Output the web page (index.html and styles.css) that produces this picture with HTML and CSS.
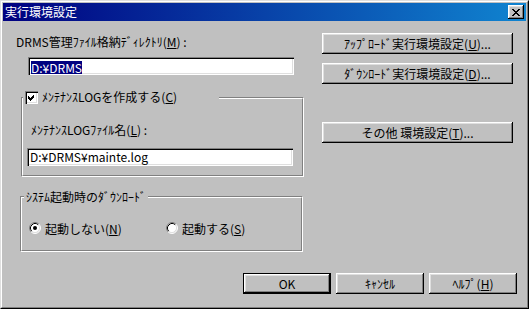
FILE: index.html
```html
<!DOCTYPE html>
<html lang="ja">
  <head>
    <meta charset="UTF-8" />
    <title>実行環境設定</title>
    <link rel="stylesheet" href="styles.css">
  </head>
  <body>
    <div class="dialog">
      <div class="frame">
        <div class="titlebar">
          <span class="title">実行環境設定</span>
          <button class="close-btn">
            <svg width="8" height="7" viewBox="0 0 8 7">
              <path d="M0 0h2v1h-2z M6 0h2v1h-2z M1 1h2v1h-2z M5 1h2v1h-2z M2 2h4v1h-4z M3 3h2v1h-2z M2 4h4v1h-4z M1 5h2v1h-2z M5 5h2v1h-2z M0 6h2v1h-2z M6 6h2v1h-2z" fill="#000"/>
            </svg>
          </button>
        </div>

        <div class="body">
          <div class="main">
            <div class="left">
              <div class="label lbl-dir">DRMS管理ﾌｧｲﾙ格納ﾃﾞｨﾚｸﾄﾘ(<u>M</u>) :</div>
              <div class="textbox tb-dir"><span class="sel">D:¥DRMS</span></div>

              <div class="group group-log">
                <div class="group-in">
                  <label class="legend legend-check">
                    <span class="checkbox">
                      <svg width="7" height="7" viewBox="0 0 7 7" shape-rendering="crispEdges">
                        <path d="M6 0v3l-4 4l-2-2v-3l2 2z" fill="#000"/>
                      </svg>
                    </span>
                    <span>ﾒﾝﾃﾅﾝｽLOGを作成する(<u>C</u>)</span>
                  </label>
                  <div class="label lbl-log">ﾒﾝﾃﾅﾝｽLOGﾌｧｲﾙ名(<u>L</u>) :</div>
                  <div class="textbox tb-log">D:¥DRMS¥mainte.log</div>
                </div>
              </div>

              <div class="group group-boot">
                <div class="group-in">
                  <div class="legend legend-text">ｼｽﾃﾑ起動時のﾀﾞｳﾝﾛｰﾄﾞ</div>
                  <div class="radios">
                    <label class="radio radio-first">
                      <svg width="12" height="12" viewBox="0 0 12 12">
                        <circle cx="6" cy="6" r="5" fill="#fff"/>
                        <path d="M2.11 9.89A5.5 5.5 0 0 1 9.89 2.11" fill="none" stroke="#808080"/>
                        <path d="M9.89 2.11A5.5 5.5 0 0 1 2.11 9.89" fill="none" stroke="#fff"/>
                        <path d="M2.82 9.18A4.5 4.5 0 0 1 9.18 2.82" fill="none" stroke="#000"/>
                        <path d="M9.18 2.82A4.5 4.5 0 0 1 2.82 9.18" fill="none" stroke="#dfdfdf"/>
                        <circle cx="6" cy="6" r="2" fill="#000"/>
                      </svg>
                      <span>起動しない(<u>N</u>)</span>
                    </label>
                    <label class="radio">
                      <svg width="12" height="12" viewBox="0 0 12 12">
                        <circle cx="6" cy="6" r="5" fill="#fff"/>
                        <path d="M2.11 9.89A5.5 5.5 0 0 1 9.89 2.11" fill="none" stroke="#808080"/>
                        <path d="M9.89 2.11A5.5 5.5 0 0 1 2.11 9.89" fill="none" stroke="#fff"/>
                        <path d="M2.82 9.18A4.5 4.5 0 0 1 9.18 2.82" fill="none" stroke="#000"/>
                        <path d="M9.18 2.82A4.5 4.5 0 0 1 2.82 9.18" fill="none" stroke="#dfdfdf"/>
                      </svg>
                      <span>起動する(<u>S</u>)</span>
                    </label>
                  </div>
                </div>
              </div>
            </div>

            <div class="right">
              <button class="btn btn-wide">ｱｯﾌﾟﾛｰﾄﾞ実行環境設定(<u>U</u>)...</button>
              <button class="btn btn-wide btn-down">ﾀﾞｳﾝﾛｰﾄﾞ実行環境設定(<u>D</u>)...</button>
              <button class="btn btn-wide btn-other">その他 環境設定(<u>T</u>)...</button>
            </div>
          </div>

          <div class="footer">
            <button class="btn btn-default">OK</button>
            <button class="btn">ｷｬﾝｾﾙ</button>
            <button class="btn">ﾍﾙﾌﾟ(<u>H</u>)</button>
          </div>
        </div>
      </div>
    </div>
  </body>
</html>
```

FILE: styles.css
```css
* {
  box-sizing: border-box;
}

body {
  margin: 0;
  font-family: "Noto Sans CJK JP", "Noto Sans", sans-serif;
  font-size: 12px;
  color: #000;
  background: #c0c0c0;
}

.dialog {
  width: 529px;
  height: 309px;
  border: 1px solid;
  border-color: #dfdfdf #000 #000 #dfdfdf;
  background: #c0c0c0;
}

.frame {
  height: 100%;
  padding: 1px;
  border: 1px solid;
  border-color: #fff #808080 #808080 #fff;
  display: flex;
  flex-direction: column;
}

.titlebar {
  height: 18px;
  padding: 0 2px;
  display: flex;
  align-items: center;
  justify-content: space-between;
  background: linear-gradient(to right, #000080, #1084d0);
}

.title {
  color: #fff;
  line-height: 18px;
}

.close-btn {
  width: 16px;
  height: 14px;
  padding: 0;
  border: none;
  background: #c0c0c0;
  display: flex;
  align-items: center;
  justify-content: center;
  box-shadow: inset -1px -1px #000, inset 1px 1px #fff, inset -2px -2px #808080, inset 2px 2px #dfdfdf;
}

.body {
  flex: 1;
  display: flex;
  flex-direction: column;
  padding: 12px 9px 12px 13px;
}

.main {
  display: flex;
  gap: 18px;
}

.left {
  width: 288px;
}

.right {
  width: 191px;
  display: flex;
  flex-direction: column;
}

.label {
  line-height: 14px;
  white-space: nowrap;
}

.lbl-dir {
  margin-top: 2px;
}

.textbox {
  width: 266px;
  height: 18px;
  padding: 0 3px;
  line-height: 18px;
  background: #fff;
  white-space: nowrap;
  box-shadow: inset 1px 1px #808080, inset 2px 2px #000, inset -1px -1px #fff, inset -2px -2px #dfdfdf;
}

.tb-dir {
  margin: 8px 0 0 12px;
}

.sel {
  display: inline-block;
  line-height: 13px;
  vertical-align: middle;
  background: #000080;
  color: #fff;
}

.group {
  width: 283px;
  border: 1px solid;
  border-color: #808080 #fff #fff #808080;
}

.group-in {
  border: 1px solid;
  border-color: #fff #808080 #808080 #fff;
}

.legend {
  background: #c0c0c0;
  line-height: 14px;
  white-space: nowrap;
}

.group-log {
  margin: 22px 0 0 5px;
}

.group-log .group-in {
  padding-bottom: 9px;
}

.legend-check {
  width: 196px;
  height: 14px;
  margin-top: -9px;
  padding-left: 2px;
  display: flex;
  align-items: center;
  gap: 4px;
}

.checkbox {
  width: 13px;
  height: 13px;
  background: #fff;
  display: flex;
  align-items: center;
  justify-content: center;
  box-shadow: inset 1px 1px #808080, inset 2px 2px #000, inset -1px -1px #fff, inset -2px -2px #dfdfdf;
}

.lbl-log {
  margin: 19px 0 0 8px;
}

.tb-log {
  margin: 11px 0 0 4px;
}

.group-boot {
  margin: 19px 0 0 4px;
}

.group-boot .group-in {
  padding-bottom: 15px;
}

.legend-text {
  display: inline-block;
  margin: -8px 0 0 2px;
  padding: 0 2px;
  vertical-align: top;
}

.radios {
  margin-top: 6px;
  padding-left: 7px;
  display: flex;
}

.radio {
  height: 14px;
  display: flex;
  align-items: center;
  gap: 4px;
  white-space: nowrap;
}

.radio-first {
  width: 137px;
}

.btn {
  height: 21px;
  width: 88px;
  padding: 0;
  border: none;
  background: #c0c0c0;
  font-family: inherit;
  font-size: 12px;
  color: #000;
  white-space: nowrap;
  box-shadow: inset -1px -1px #000, inset 1px 1px #fff, inset -2px -2px #808080, inset 2px 2px #dfdfdf;
}

.btn-wide {
  width: 191px;
}

.btn-down {
  margin-top: 9px;
}

.btn-other {
  margin-top: 38px;
}

.btn-default {
  box-shadow: inset 0 0 0 1px #000, inset -2px -2px #000, inset 2px 2px #fff, inset -3px -3px #808080, inset 3px 3px #dfdfdf;
}

.footer {
  margin-top: auto;
  display: flex;
  justify-content: flex-end;
  gap: 5px;
}
```
